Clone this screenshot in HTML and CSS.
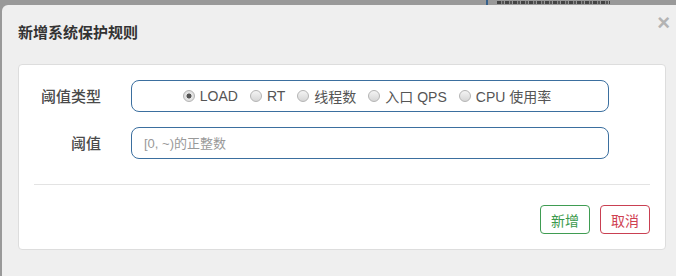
FILE: index.html
```html
<!DOCTYPE html>
<html lang="zh-CN">
<head>
<meta charset="utf-8">
<title>新增系统保护规则</title>
<link rel="stylesheet" href="styles.css">
</head>
<body>
<div class="strip"><span class="strip-bar"></span><span class="strip-glyphs"></span></div>
<div class="modal">
  <div class="modal-header">
    <h4 class="modal-title">新增系统保护规则</h4>
    <span class="close">×</span>
  </div>
  <div class="modal-body">
    <div class="panel">
      <div class="form-grid">
        <label class="form-label">阈值类型</label>
        <div class="radio-group">
          <label class="radio-item"><input type="radio" name="t" checked><span>LOAD</span></label>
          <label class="radio-item"><input type="radio" name="t"><span>RT</span></label>
          <label class="radio-item"><input type="radio" name="t"><span>线程数</span></label>
          <label class="radio-item"><input type="radio" name="t"><span>入口 QPS</span></label>
          <label class="radio-item"><input type="radio" name="t"><span>CPU 使用率</span></label>
        </div>
        <label class="form-label">阈值</label>
        <input class="text-input" type="text" placeholder="[0, ~)的正整数">
      </div>
      <div class="divider"></div>
      <div class="footer">
        <button class="btn btn-ok">新增</button>
        <button class="btn btn-cancel">取消</button>
      </div>
    </div>
  </div>
</div>
</body>
</html>
```
FILE: styles.css
```css
html, body {
  margin: 0;
  padding: 0;
}
body {
  width: 676px;
  height: 276px;
  overflow: hidden;
  background: #999999;
  font-family: "Liberation Sans", "Noto Sans CJK SC", sans-serif;
}
.strip {
  display: flex;
  height: 5px;
  overflow: hidden;
  padding-left: 486px;
}
.strip-bar {
  width: 2px;
  background: #35618c;
}
.strip-glyphs {
  margin-left: 9px;
  margin-top: 1px;
  width: 113px;
  height: 3px;
  background: repeating-linear-gradient(90deg, #444 0, #444 4px, #8a8a8a 4px, #8a8a8a 5px, #555 5px, #555 7px, #999 7px, #999 8px);
}
.modal {
  margin-left: 2px;
  height: 271px;
  background: #efefef;
  border-radius: 6px 0 0 0;
}
.modal-header {
  display: flex;
  align-items: flex-start;
  height: 59px;
  box-sizing: border-box;
  padding: 18px 0 0 16px;
}
.modal-title {
  margin: 0;
  font-size: 15px;
  line-height: 18px;
  font-weight: 600;
  color: #333;
  font-family: "Noto Sans CJK SC", sans-serif;
}
.close {
  margin-left: auto;
  margin-right: 6px;
  margin-top: -11px;
  font-size: 22px;
  line-height: 22px;
  font-weight: bold;
  color: #b3b3b3;
}
.modal-body {
  padding: 0 10px 0 16px;
}
.panel {
  background: #fff;
  border: 1px solid #dddddd;
  border-radius: 4px;
  padding: 15px 15px 15px 15px;
}
.form-grid {
  display: grid;
  grid-template-columns: 67px 478px;
  grid-auto-rows: 32px;
  column-gap: 30px;
  row-gap: 15px;
}
.form-label {
  font-size: 15px;
  font-weight: 500;
  color: #4a4a4a;
  text-align: right;
  line-height: 32px;
  font-family: "Noto Sans CJK SC", sans-serif;
}
.radio-group {
  display: flex;
  justify-content: center;
  align-items: center;
  gap: 12px;
  box-sizing: border-box;
  height: 32px;
  padding-right: 6px;
  border: 1px solid #3b6f9f;
  border-radius: 8px;
}
.radio-item {
  display: flex;
  align-items: center;
  font-size: 14px;
  color: #555;
}
.radio-item input {
  appearance: none;
  -webkit-appearance: none;
  width: 12px;
  height: 12px;
  margin: 0 5px 0 0;
  border: 1px solid #b4b4b4;
  border-radius: 50%;
  background: linear-gradient(#f4f4f4, #d6d6d6);
  box-sizing: border-box;
}
.radio-item input:checked {
  background: radial-gradient(circle, #555 0, #555 2.2px, #e6e6e6 2.8px, #d8d8d8 100%);
}
.text-input {
  box-sizing: border-box;
  height: 32px;
  width: 478px;
  padding: 0 12px;
  border: 1px solid #3b6f9f;
  border-radius: 8px;
  font-size: 13px;
  font-family: "Liberation Sans", "Noto Sans CJK SC", sans-serif;
  color: #555;
  outline: none;
}
.text-input::placeholder {
  color: #999;
}
.divider {
  margin-top: 25px;
  height: 1px;
  background: #e3e3e3;
}
.footer {
  display: flex;
  justify-content: flex-end;
  gap: 10px;
  margin-top: 20px;
}
.btn {
  width: 50px;
  height: 29px;
  padding: 0;
  background: #fff;
  border-radius: 4px;
  font-size: 14px;
  font-family: "Noto Sans CJK SC", sans-serif;
}
.btn-ok {
  border: 1px solid #3f9c52;
  color: #3a9a4c;
}
.btn-cancel {
  border: 1px solid #c94052;
  color: #cf4151;
}
```
